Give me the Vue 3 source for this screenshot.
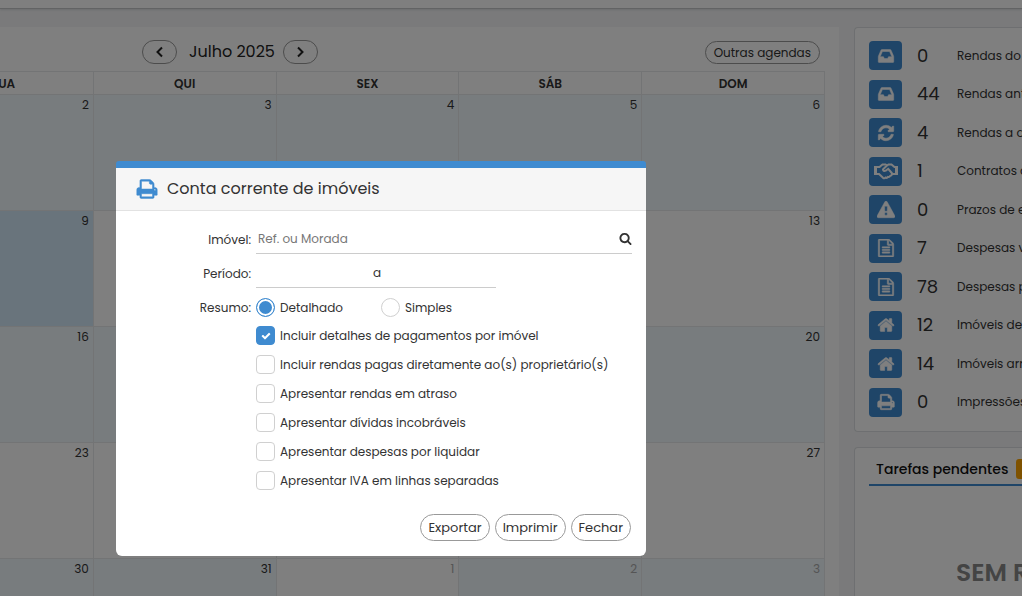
<script setup>
import { ref } from 'vue'

const icons = {
  print: 'M448 1536h896v-256h-896v256zm0-640h896v-384h-160q-40 0-68-28t-28-68v-160h-640v640zm1152 64q0-26-19-45t-45-19-45 19-19 45 19 45 45 19 45-19 19-45zm128 0v416q0 13-9.5 22.5t-22.5 9.5h-224v160q0 40-28 68t-68 28h-960q-40 0-68-28t-28-68v-160h-224q-13 0-22.5-9.5t-9.5-22.5v-416q0-79 56.5-135.5t135.5-56.5h64v-544q0-40 28-68t68-28h672q40 0 88 20t76 48l152 152q28 28 48 76t20 88v256h64q79 0 135.5 56.5t56.5 135.5z',
  inbox: 'M1151 960h316q-1-3-2.5-8t-2.5-8l-212-496h-708l-212 496q-1 2-2.5 8t-2.5 8h316l95 192h320zm513 30v482q0 26-19 45t-45 19h-1408q-26 0-45-19t-19-45v-482q0-62 25-123l238-552q10-25 36.5-42t52.5-17h832q26 0 52.5 17t36.5 42l238 552q25 61 25 123z',
  refresh: 'M1639 1056q0 5-1 7-64 268-268 434.5t-478 166.5q-146 0-282.5-55t-243.5-157l-129 129q-19 19-45 19t-45-19-19-45v-448q0-26 19-45t45-19h448q26 0 45 19t19 45-19 45l-137 137q71 66 161 102t187 36q134 0 250-65t186-179q11-17 53-117 8-23 30-23h192q13 0 22.5 9.5t9.5 22.5zm25-800v448q0 26-19 45t-45 19h-448q-26 0-45-19t-19-45 19-45l138-138q-148-137-349-137-134 0-250 65t-186 179q-11 17-53 117-8 23-30 23h-199q-13 0-22.5-9.5t-9.5-22.5v-7q65-268 270-434.5t480-166.5q146 0 284 55.5t245 156.5l130-129q19-19 45-19t45 19 19 45z',
  warning: 'M1024 1375v-190q0-14-9.5-23.5t-22.5-9.5h-192q-13 0-22.5 9.5t-9.5 23.5v190q0 14 9.5 23.5t22.5 9.5h192q13 0 22.5-9.5t9.5-23.5zm-2-374l18-459q0-12-10-19-13-11-24-11h-220q-11 0-24 11-10 7-10 21l17 457q0 10 10 16.5t24 6.5h185q14 0 23.5-6.5t10.5-16.5zm-14-934l768 1408q35 63-2 126-17 29-46.5 46t-63.5 17h-1536q-34 0-63.5-17t-46.5-46q-37-63-2-126l768-1408q17-31 47-49t65-18 65 18 47 49z',
  file: 'M1596 380q28 28 48 76t20 88v1152q0 40-28 68t-68 28h-1344q-40 0-68-28t-28-68v-1600q0-40 28-68t68-28h896q40 0 88 20t76 48zm-444-244v376h376q-10-29-22-41l-313-313q-12-12-41-22zm384 1528v-1024h-416q-40 0-68-28t-28-68v-416h-768v1536h1280zm-1024-864q0-14 9-23t23-9h704q14 0 23 9t9 23v64q0 14-9 23t-23 9h-704q-14 0-23-9t-9-23v-64zm736 224q14 0 23 9t9 23v64q0 14-9 23t-23 9h-704q-14 0-23-9t-9-23v-64q0-14 9-23t23-9h704zm0 256q14 0 23 9t9 23v64q0 14-9 23t-23 9h-704q-14 0-23-9t-9-23v-64q0-14 9-23t23-9h704z',
  home: 'M1472 992v480q0 26-19 45t-45 19h-384v-384h-256v384h-384q-26 0-45-19t-19-45v-480q0-1 .5-3t.5-3l575-474 575 474q1 2 1 6zm223-69l-62 74q-8 9-21 11h-3q-13 0-21-7l-692-577-692 577q-12 8-24 7-13-2-21-11l-62-74q-8-10-7-23.5t11-21.5l719-599q32-26 76-26t76 26l244 204v-195q0-14 9-23t23-9h192q14 0 23 9t9 23v408l219 182q10 8 11 21.5t-7 23.5z',
  search: 'M1216 832q0-185-131.5-316.5t-316.5-131.5-316.5 131.5-131.5 316.5 131.5 316.5 316.5 131.5 316.5-131.5 131.5-316.5zm512 832q0 52-38 90t-90 38q-54 0-90-38l-343-342q-179 124-399 124-143 0-273.5-55.5t-225-150-150-225-55.5-273.5 55.5-273.5 150-225 225-150 273.5-55.5 273.5 55.5 225 150 150 225 55.5 273.5q0 220-124 399l343 343q37 37 37 90z',
  check: 'M1671 566q0 40-28 68l-724 724-136 136q-28 28-68 28t-68-28l-136-136-362-362q-28-28-28-68t28-68l136-136q28-28 68-28t68 28l294 295 656-657q28-28 68-28t68 28l136 136q28 28 28 68z'
}

const weekdays = ['QUA', 'QUI', 'SEX', 'SÁB', 'DOM']
const weeks = [
  { shaded: true, days: [2, 3, 4, 5, 6] },
  { shaded: false, days: [9, 10, 11, 12, 13] },
  { shaded: true, days: [16, 17, 18, 19, 20] },
  { shaded: false, days: [23, 24, 25, 26, 27] },
  { shaded: true, last: true, days: [30, 31, 1, 2, 3] }
]

const stats = [
  { icon: 'inbox', count: 0, label: 'Rendas do mês' },
  { icon: 'inbox', count: 44, label: 'Rendas anteriores' },
  { icon: 'refresh', count: 4, label: 'Rendas a atualizar' },
  { icon: 'handshake', count: 1, label: 'Contratos a terminar' },
  { icon: 'warning', count: 0, label: 'Prazos de entrega' },
  { icon: 'file', count: 7, label: 'Despesas vencidas' },
  { icon: 'file', count: 78, label: 'Despesas pendentes' },
  { icon: 'home', count: 12, label: 'Imóveis devolutos' },
  { icon: 'home', count: 14, label: 'Imóveis arrendados' },
  { icon: 'print', count: 0, label: 'Impressões' }
]

const property = ref('')
const from = ref('')
const to = ref('')
const summary = ref('detalhado')
const options = ref([
  { label: 'Incluir detalhes de pagamentos por imóvel', checked: true },
  { label: 'Incluir rendas pagas diretamente ao(s) proprietário(s)', checked: false },
  { label: 'Apresentar rendas em atraso', checked: false },
  { label: 'Apresentar dívidas incobráveis', checked: false },
  { label: 'Apresentar despesas por liquidar', checked: false },
  { label: 'Apresentar IVA em linhas separadas', checked: false }
])
</script>

<template>
  <div class="page">
    <header class="topbar"></header>
    <main class="content">
      <section class="agenda">
        <div class="toolbar">
          <button class="pill nav" aria-label="Mês anterior">
            <svg viewBox="0 0 12 12"><path d="M8 1.5 3.5 6 8 10.5" /></svg>
          </button>
          <h2>Julho 2025</h2>
          <button class="pill nav" aria-label="Mês seguinte">
            <svg viewBox="0 0 12 12"><path d="M4 1.5 8.500 6 4 10.5" /></svg>
          </button>
          <button class="pill other">Outras agendas</button>
        </div>
        <div class="calendar-clip">
          <table class="calendar">
            <thead>
              <tr><th v-for="d in weekdays" :key="d" scope="col">{{ d }}</th></tr>
            </thead>
            <tbody>
              <tr v-for="(w, i) in weeks" :key="i">
                <td
                  v-for="(d, j) in w.days"
                  :key="j"
                  :class="{ shaded: w.shaded && !(w.last && d === 1), today: d === 9, outside: w.last && d < 10 }"
                >{{ d }}</td>
              </tr>
            </tbody>
          </table>
        </div>
      </section>

      <aside class="side">
        <section class="card stats">
          <div v-for="(s, i) in stats" :key="i" class="stat">
            <span class="tile">
              <svg v-if="s.icon === 'handshake'" class="shake" viewBox="0 0 24 18">
                <path class="solid" d="M0 4h3v9H0zM21 4h3v9h-3z" />
                <path d="M3 5h2.500l3-2.500h3l1.500 1 1.500-1h3L20.500 5H21M3 12h2l4 3.800q1.500 1 2.500-.2 1.500 .8 2.500-.7 1.500 .4 2.200-1 1.500 0 1.800-1.900h3M13 3.500 9 7.300q.2 2.500 2.800 1.400l2.400-1.900 4 4.700" />
              </svg>
              <svg v-else viewBox="0 0 1792 1792"><path :d="icons[s.icon]" /></svg>
            </span>
            <strong>{{ s.count }}</strong>
            <span class="stat-label">{{ s.label }}</span>
          </div>
        </section>
        <section class="card tasks">
          <h3>Tarefas pendentes <span class="badge">0</span></h3>
          <p>SEM REGISTOS</p>
        </section>
      </aside>
    </main>

    <div class="overlay">
      <form class="modal" role="dialog" aria-labelledby="dialog-title" @submit.prevent>
        <header class="modal-head">
          <svg viewBox="0 0 1792 1792"><path :d="icons.print" /></svg>
          <h1 id="dialog-title">Conta corrente de imóveis</h1>
        </header>
        <div class="fields">
          <label class="name" for="property">Imóvel:</label>
          <div class="line">
            <input id="property" v-model="property" type="text" placeholder="Ref. ou Morada" />
            <button class="search" type="button" aria-label="Pesquisar">
              <svg viewBox="0 0 1792 1792"><path :d="icons.search" /></svg>
            </button>
          </div>
          <label class="name" for="from">Período:</label>
          <div class="line period">
            <input id="from" v-model="from" type="text" />
            <span>a</span>
            <input v-model="to" type="text" aria-label="Fim do período" />
          </div>
          <span id="summary-name" class="name">Resumo:</span>
          <div class="radios" role="radiogroup" aria-labelledby="summary-name">
            <label class="choice"><input v-model="summary" type="radio" value="detalhado" />Detalhado</label>
            <label class="choice"><input v-model="summary" type="radio" value="simples" />Simples</label>
          </div>
          <div class="checks">
            <label v-for="o in options" :key="o.label" class="choice">
              <span class="box">
                <input v-model="o.checked" type="checkbox" />
                <svg v-if="o.checked" viewBox="0 0 1792 1792"><path :d="icons.check" /></svg>
              </span>{{ o.label }}
            </label>
          </div>
        </div>
        <footer class="actions">
          <button class="pill" type="button">Exportar</button>
          <button class="pill" type="button">Imprimir</button>
          <button class="pill" type="button">Fechar</button>
        </footer>
      </form>
    </div>
  </div>
</template>

<style>
html, body { margin: 0; overflow: hidden; }
</style>

<style scoped>
* { box-sizing: border-box; }
.page {
  height: 100vh;
  overflow: hidden;
  background: #f4f5f6;
  color: #333;
  font-family: Poppins, Inter, "Open Sans", sans-serif;
  font-size: 12px;
  font-weight: 400;
  line-height: 20px;
}
h1, h2, h3, p { margin: 0; font-weight: 400; }
button, input { font: inherit; color: inherit; margin: 0; }
svg { display: block; fill: currentColor; }

.topbar { height: 9px; background: #fff; border-bottom: 1px solid #c4c6c8; box-shadow: 0 1px 2px #d8dadc; }
.content { display: grid; grid-template-columns: 1fr 168px; gap: 15px; padding-top: 18px; }

.agenda { min-width: 0; background: #fff; }
.toolbar { display: flex; align-items: center; height: 44px; padding: 6px 19px 0 142px; }
.toolbar h2 { padding: 0 8px 0 12px; font-size: 16px; line-height: 24px; color: #222; }
.pill { border: 1px solid #999; border-radius: 14px; background: #fff; cursor: pointer; }
.nav { display: grid; place-items: center; width: 35px; height: 24px; padding: 0; }
.nav svg { width: 12px; height: 12px; fill: none; stroke: #222; stroke-width: 2; }
.other { height: 23px; margin-left: auto; padding: 0 8px; line-height: 21px; }

.calendar-clip { overflow: hidden; padding-right: 14px; }
.calendar { width: calc(100% + 90px); margin-left: -90px; border-collapse: collapse; table-layout: fixed; }
.calendar th { height: 23px; padding: 2px 0 0; border: 1px solid #e6e8ea; font-weight: 600; line-height: 20px; }
.calendar td {
  height: 116px;
  padding: 0 4px 0 0;
  border: 1px solid #e6e8ea;
  vertical-align: top;
  text-align: right;
}
.calendar .shaded { background: #f0f8fd; }
.calendar .today { background: #d3e8f8; }
.calendar .outside { color: #aaa; }

.side { min-width: 0; overflow: hidden; display: grid; align-content: start; gap: 15px; }
.card { border: 1px solid #dcdfe2; border-right: 0; border-radius: 4px 0 0 4px; background: #fff; }
.stats { display: flex; flex-direction: column; justify-content: space-between; min-height: 405px; padding: 13px 0 14px 14px; }
.stat { display: grid; grid-template-columns: 33px 25px 1fr; column-gap: 15px; align-items: center; height: 29px; white-space: nowrap; }
.tile { display: grid; place-items: center; height: 29px; border-radius: 4px; background: #3f8bd0; color: #fff; }
.tile svg { width: 18px; height: 18px; stroke: currentColor; stroke-width: 50; }
.tile .shake { width: 24px; height: 18px; fill: none; stroke-width: 2; }
.shake .solid { fill: currentColor; stroke: none; }
.stat strong { font-size: 18px; font-weight: 400; }
.tasks { min-height: 220px; padding: 11px 0 0 14px; white-space: nowrap; }
.tasks h3 { display: flex; align-items: center; gap: 8px; height: 27px; padding-left: 7px; padding-bottom: 5px; border-bottom: 2px solid #3f8bd0; font-size: 14px; font-weight: 500; color: #111; }
.badge { flex: none; padding: 0 6px; border-radius: 3px; background: #ffa500; color: #fff; font-size: 12px; }
.tasks p { padding: 71px 0 0 87px; color: #888; font-size: 25px; font-weight: 600; line-height: 32px; }

.overlay { position: fixed; inset: 0; display: flex; align-items: flex-start; padding: 161px 0 0 116px; background: rgba(0, 0, 0, 0.5); }
.modal { flex: 0 1 530px; overflow: hidden; border-top: 7px solid #3f8bd0; border-radius: 3px 3px 6px 6px; background: #fff; }
.modal-head { display: flex; align-items: center; gap: 9px; height: 43px; padding: 0 20px; border-bottom: 1px solid #e2e2e2; background: #f6f6f6; }
.modal-head svg { width: 22px; height: 22px; color: #3f8bd0; stroke: currentColor; stroke-width: 40; }
.modal-head h1 { font-size: 16px; line-height: 24px; }
.fields { display: grid; grid-template-columns: 120px 1fr; column-gap: 5px; padding: 13px 14px 0 15px; }
.name { padding-top: 6px; text-align: right; }
.line { display: flex; align-items: center; height: 30px; margin-bottom: 4px; border-bottom: 1px solid #ccc; }
.line input { flex: 1; min-width: 0; height: 28px; padding: 0 2px; border: 0; outline: 0; background: none; }
.line input::placeholder { color: #777; opacity: 1; }
.search { padding: 0; border: 0; background: none; }
.search svg { width: 13px; height: 13px; }
.period { width: 240px; padding-left: 2px; }
.radios { display: flex; gap: 38px; align-items: center; height: 29px; padding-top: 2px; }
.choice { display: flex; align-items: center; gap: 5px; height: 29px; white-space: nowrap; }
input[type='radio'], input[type='checkbox'] { appearance: none; flex: none; width: 19px; height: 19px; border: 1px solid #d0d0d0; background: #fff; }
input[type='radio'] { border-radius: 50%; }
input[type='radio']:checked { border-color: #3f8bd0; background: #3f8bd0; box-shadow: inset 0 0 0 2px #fff; }
.box { display: grid; flex: none; }
.box > * { grid-area: 1 / 1; place-self: center; }
.box svg { width: 10px; height: 10px; color: #fff; pointer-events: none; }
input[type='checkbox'] { border-radius: 4px; }
input[type='checkbox']:checked { border-color: #3f8bd0; background: #3f8bd0; }
.checks { grid-column: 2; }
.actions { display: flex; justify-content: flex-end; gap: 5px; padding: 19px 15px 15px; }
.actions .pill { height: 27px; padding: 0 7px; font-size: 13px; line-height: 24px; }
</style>
